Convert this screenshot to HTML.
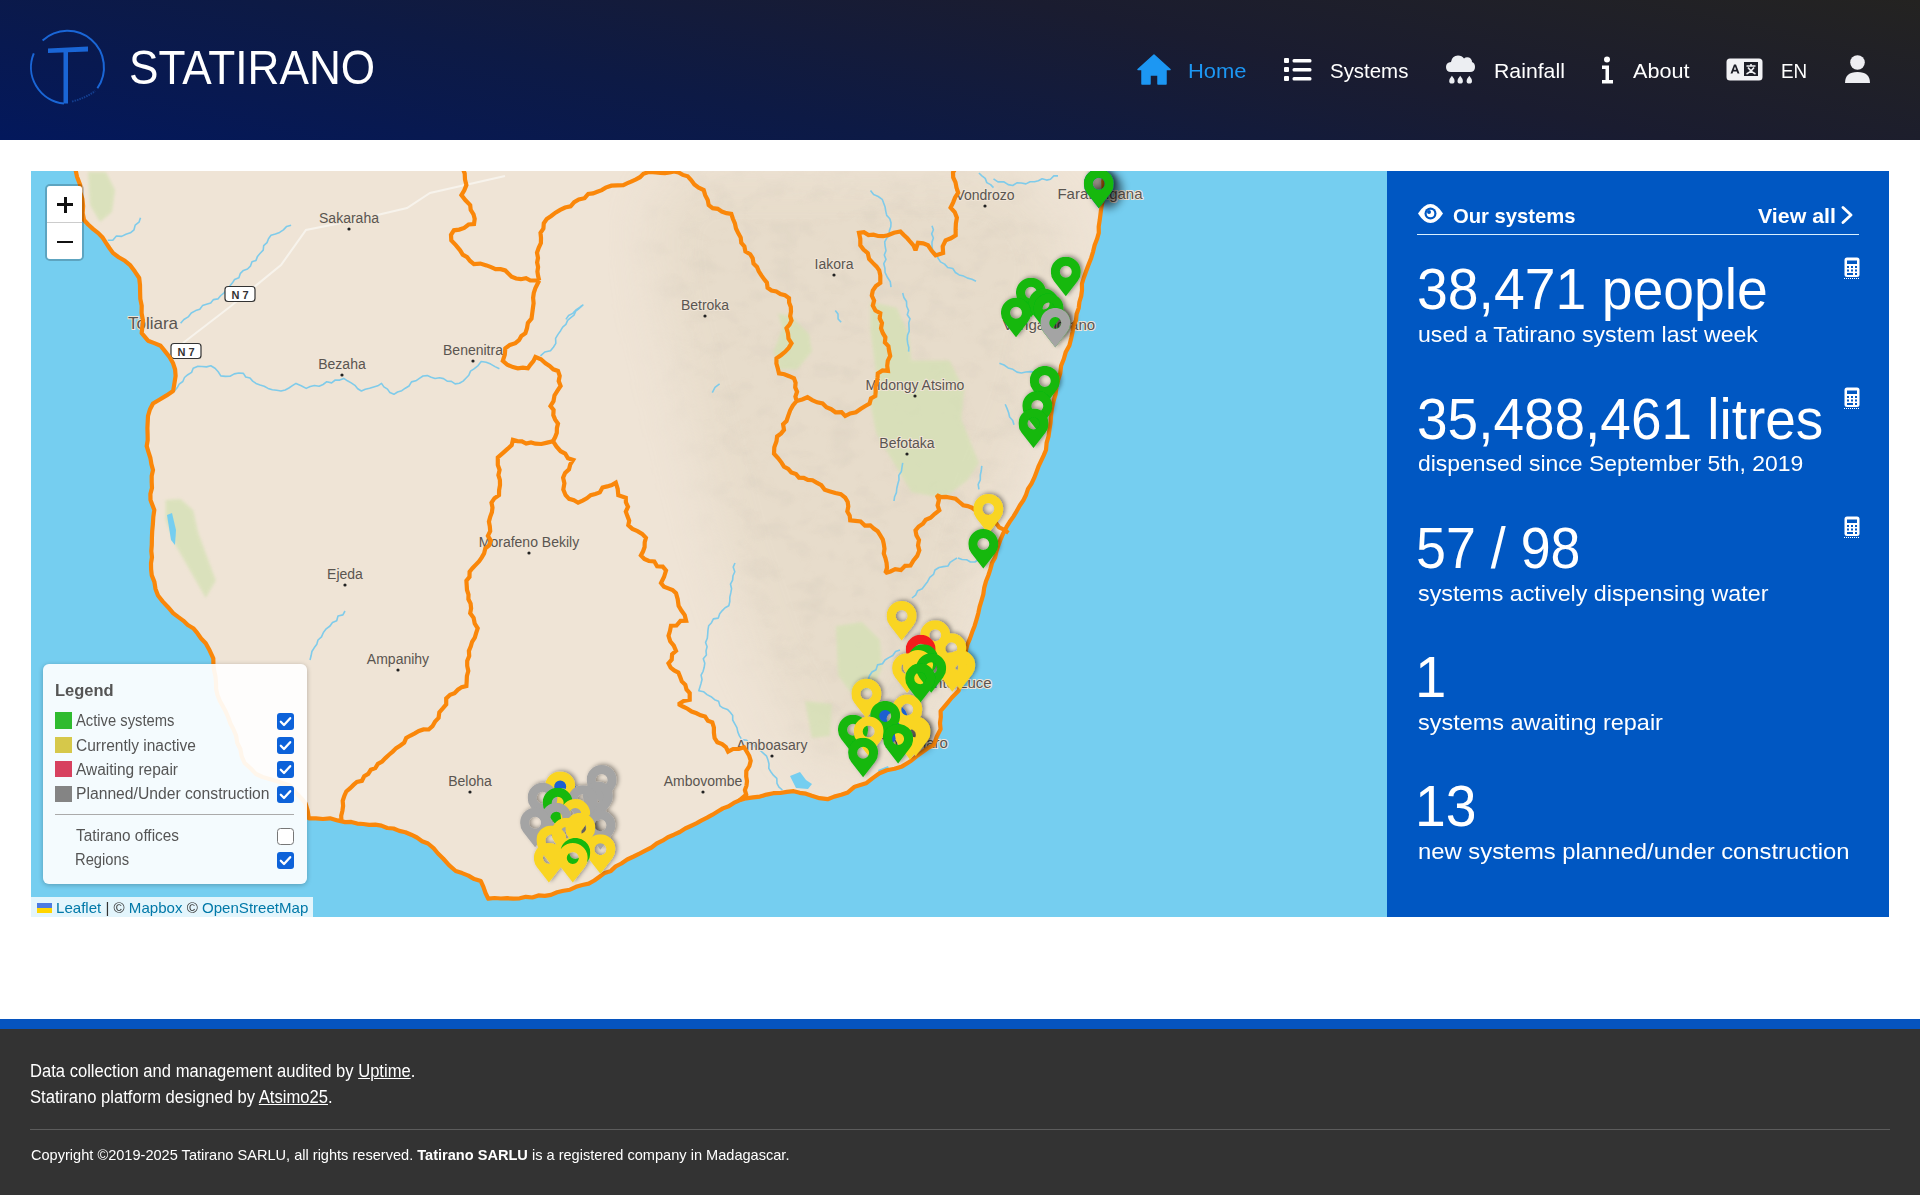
<!DOCTYPE html>
<html><head><meta charset="utf-8">
<style>
*{box-sizing:border-box;margin:0;padding:0}
html,body{width:1920px;height:1195px;overflow:hidden;background:#fff;font-family:"Liberation Sans",sans-serif}
.abs{position:absolute;white-space:nowrap}
#hdr{position:absolute;left:0;top:0;width:1920px;height:140px;background:linear-gradient(12deg,#03185c 0%,#0d1a45 35%,#1a1c30 65%,#242321 100%)}
#brand{left:130px;top:43px;color:#fff;font-size:47px;line-height:47px;letter-spacing:0px;transform-origin:0 0}
.nav{color:#fff;font-size:20px;line-height:20px;transform-origin:0 0}
#main-map{position:absolute;left:31px;top:171px;width:1356px;height:746px;overflow:hidden;background:#75cff0}
#side{position:absolute;left:1387px;top:171px;width:502px;height:746px;background:#0057c2;color:#fff}
.big{color:#fff;font-size:55px;line-height:55px;transform-origin:0 0}
.sub{color:#fff;font-size:22px;line-height:22px;transform-origin:0 0}
#foot-stripe{position:absolute;left:0;top:1019px;width:1920px;height:10px;background:#0654be}
#foot{position:absolute;left:0;top:1029px;width:1920px;height:166px;background:#333333;color:#fff}
.ft{color:#fff;font-size:17px;line-height:17px;transform-origin:0 0}
</style></head><body>
<div id="hdr">
  <svg class="abs" style="left:0;top:0" width="130" height="140" viewBox="0 0 130 140">
    <path d="M 42.6 40.6 A 36.5 36.5 0 0 1 97.4 88.2" fill="none" stroke="#1a66d6" stroke-width="2"/>
    <path d="M 33.8 53.3 A 36.5 36.5 0 0 0 64 103.6" fill="none" stroke="#1a66d6" stroke-width="2"/>
    <path d="M 48 48.5 L 88 46.5 L 88 51.5 L 48 53 Z" fill="#1a66d6"/>
    <rect x="63.5" y="50" width="4.5" height="53.5" fill="#1a66d6"/>
    <path d="M 72 101.5 Q 86 98 95 91" fill="none" stroke="#1a4fa8" stroke-width="2" stroke-dasharray="1.5 1" opacity="0.7"/>
  </svg>
  <div class="abs" id="brand" style="left:128.78px;top:44.37px;font-size:48px;line-height:48px;transform:scaleX(0.9202);transform-origin:0 0;letter-spacing:0px;color:#fff">STATIRANO</div>
  <!-- home icon -->
  <svg class="abs" style="left:1137px;top:54px" width="34" height="31" viewBox="0 0 34 31">
    <path d="M17 1 L33 15.5 L29 15.5 L29 30 L21 30 L21 21 L13 21 L13 30 L5 30 L5 15.5 L1 15.5 Z" fill="#1c97f3" stroke="#1c97f3" stroke-width="1.5" stroke-linejoin="round"/>
  </svg>
  <div class="abs nav" id="nHome" style="left:1187.83px;top:59.72px;font-size:21px;line-height:21px;transform:scaleX(1.0459);transform-origin:0 0;color:#1c97f3">Home</div>
  <!-- list icon -->
  <svg class="abs" style="left:1284px;top:58px" width="28" height="23" viewBox="0 0 28 23">
    <rect x="0" y="0" width="5" height="5" rx="1" fill="#fff"/><rect x="8.5" y="1" width="19" height="3.5" rx="1.5" fill="#fff"/>
    <rect x="0" y="9" width="5" height="5" rx="1" fill="#fff"/><rect x="8.5" y="10" width="19" height="3.5" rx="1.5" fill="#fff"/>
    <rect x="0" y="18" width="5" height="5" rx="1" fill="#fff"/><rect x="8.5" y="19" width="19" height="3.5" rx="1.5" fill="#fff"/>
  </svg>
  <div class="abs nav" id="nSystems" style="left:1330.21px;top:59.72px;font-size:21px;line-height:21px;transform:scaleX(0.9732);transform-origin:0 0;">Systems</div>
  <!-- cloud rain -->
  <svg class="abs" style="left:1445px;top:54px" width="31" height="30" viewBox="0 0 31 30">
    <path d="M6 18 Q1 18 1 13 Q1 8.5 6 8 Q7 1.5 13 1.5 Q17 1.5 19 4.5 Q21 2.5 24 3.5 Q27 5 27 8 Q30 9 30 13 Q30 18 25 18 Z" fill="#eceef2"/>
    <path d="M6.9 21.8 Q4.2 25 4.2 26.9 A2.7 2.7 0 0 0 9.600000000000001 26.9 Q9.600000000000001 25 6.9 21.8 Z M15.2 21.8 Q12.5 25 12.5 26.9 A2.7 2.7 0 0 0 17.9 26.9 Q17.9 25 15.2 21.8 Z M24.3 21.8 Q21.6 25 21.6 26.9 A2.7 2.7 0 0 0 27.0 26.9 Q27.0 25 24.3 21.8 Z " fill="#eceef2"/>
  </svg>
  <div class="abs nav" id="nRainfall" style="left:1494.27px;top:59.72px;font-size:21px;line-height:21px;transform:scaleX(1.0122);transform-origin:0 0;">Rainfall</div>
  <!-- info -->
  <svg class="abs" style="left:1601px;top:56px" width="13" height="28" viewBox="0 0 13 28">
    <circle cx="6" cy="3.5" r="3" fill="#fff"/>
    <path d="M1 9.5 L8 9.5 L8 24 L12 24 L12 27.5 L1 27.5 L1 24 L4.5 24 L4.5 13 L1 13 Z" fill="#fff"/>
  </svg>
  <div class="abs nav" id="nAbout" style="left:1632.82px;top:59.72px;font-size:21px;line-height:21px;transform:scaleX(1.0297);transform-origin:0 0;">About</div>
  <!-- language -->
  <svg class="abs" style="left:1726px;top:58px" width="37" height="23" viewBox="0 0 37 23">
    <rect x="0.5" y="0.5" width="36" height="22" rx="3.5" fill="#f2f2f5"/>
    <rect x="18" y="4" width="14" height="14" fill="#1d1e28"/>
    <path d="M4.5 15.5 L8 6.5 L10 6.5 L13.5 15.5 L11.5 15.5 L10.8 13.5 L7.2 13.5 L6.5 15.5 Z M7.8 11.8 L10.2 11.8 L9 8.5 Z" fill="#1d1e28"/>
    <path d="M20.5 8 L29.5 8 M25 6 L25 8 M22 9.5 Q25 14 29.5 16 M28 9.5 Q25 14 20.5 16" stroke="#f2f2f5" stroke-width="1.6" fill="none"/>
  </svg>
  <div class="abs nav" id="nEN" style="left:1781.26px;top:60.22px;font-size:21px;line-height:21px;transform:scaleX(0.8965);transform-origin:0 0;">EN</div>
  <!-- user -->
  <svg class="abs" style="left:1844px;top:54px" width="27" height="30" viewBox="0 0 27 30">
    <circle cx="13.5" cy="8.5" r="7.3" fill="#eeeef2"/>
    <path d="M1 29 Q1 18 13.5 18 Q26 18 26 29 Z" fill="#eeeef2"/>
  </svg>
</div>

<div id="main-map"><svg width="1356" height="746" viewBox="31 171 1356 746" style="display:block">
<defs><symbol id="pin" viewBox="0 0 30 41" width="30" height="41"><path fill-rule="evenodd" d="M15 39.5 L3.14 24.19 A15 15 0 1 1 26.86 24.19 Z M9 15 a6 6 0 1 0 12 0 a6 6 0 1 0 -12 0 Z"/></symbol><filter id="sh" x="-30%" y="-30%" width="160%" height="160%"><feDropShadow dx="2" dy="-1" stdDeviation="2" flood-color="#000" flood-opacity="0.4"/></filter><filter id="bl" x="-50%" y="-50%" width="200%" height="200%"><feGaussianBlur stdDeviation="4"/></filter><filter id="bl1" x="-20%" y="-20%" width="140%" height="140%"><feGaussianBlur stdDeviation="1.5"/></filter><filter id="hill" x="0" y="0" width="100%" height="100%"><feTurbulence type="fractalNoise" baseFrequency="0.035 0.05" numOctaves="3" seed="7" result="n"/><feColorMatrix in="n" type="matrix" values="0 0 0 0 0.35  0 0 0 0 0.33  0 0 0 0 0.30  0 0 0 -2.2 1.25" result="c"/><feComposite in="c" in2="SourceAlpha" operator="in"/></filter><filter id="bl2"><feGaussianBlur stdDeviation="25"/></filter></defs>
<rect x="31" y="171" width="1356" height="746" fill="#75cef0"/>
<polygon points="75.2,168.0 80.2,185.0 84.0,220.0 102.8,237.8 112.9,252.9 130.4,265.4 139.2,278.0 141.7,305.6 143.0,320.6 141.7,333.2 148.0,340.7 160.6,345.7 173.1,363.3 175.6,375.9 173.1,391.0 153.0,403.5 148.0,416.0 146.7,446.2 153.0,470.0 150.5,500.0 154.3,510.0 151.8,545.0 151.8,575.4 158.0,595.5 173.1,613.1 193.2,628.2 205.7,643.2 213.3,658.3 217.5,695.0 233.3,729.0 244.6,763.0 256.0,774.0 289.8,785.5 305.6,803.6 308.8,818.3 330.0,818.3 345.2,822.1 375.3,824.6 405.4,832.2 428.0,843.5 443.1,858.5 455.7,871.0 480.8,881.1 488.3,898.7 513.4,898.7 551.0,894.9 588.7,883.6 621.4,863.5 640.0,853.4 685.2,828.5 739.4,800.3 766.6,794.6 793.7,791.2 811.8,795.8 827.6,799.2 847.9,792.4 854.7,786.7 866.0,783.3 879.5,773.2 902.1,766.4 911.2,760.7 933.8,744.9 940.6,729.1 940.6,711.0 951.9,697.5 958.6,690.7 965.7,650.9 978.3,613.2 988.3,575.5 1003.4,532.9 1023.4,500.2 1046.0,450.0 1048.6,436.1 1053.6,401.0 1061.1,365.8 1071.2,338.2 1078.7,308.1 1083.7,278.0 1091.2,257.9 1098.8,232.8 1101.3,207.7 1105.0,168.0" fill="#efe4d6"/>
<clipPath id="landclip"><polygon points="75.2,168.0 80.2,185.0 84.0,220.0 102.8,237.8 112.9,252.9 130.4,265.4 139.2,278.0 141.7,305.6 143.0,320.6 141.7,333.2 148.0,340.7 160.6,345.7 173.1,363.3 175.6,375.9 173.1,391.0 153.0,403.5 148.0,416.0 146.7,446.2 153.0,470.0 150.5,500.0 154.3,510.0 151.8,545.0 151.8,575.4 158.0,595.5 173.1,613.1 193.2,628.2 205.7,643.2 213.3,658.3 217.5,695.0 233.3,729.0 244.6,763.0 256.0,774.0 289.8,785.5 305.6,803.6 308.8,818.3 330.0,818.3 345.2,822.1 375.3,824.6 405.4,832.2 428.0,843.5 443.1,858.5 455.7,871.0 480.8,881.1 488.3,898.7 513.4,898.7 551.0,894.9 588.7,883.6 621.4,863.5 640.0,853.4 685.2,828.5 739.4,800.3 766.6,794.6 793.7,791.2 811.8,795.8 827.6,799.2 847.9,792.4 854.7,786.7 866.0,783.3 879.5,773.2 902.1,766.4 911.2,760.7 933.8,744.9 940.6,729.1 940.6,711.0 951.9,697.5 958.6,690.7 965.7,650.9 978.3,613.2 988.3,575.5 1003.4,532.9 1023.4,500.2 1046.0,450.0 1048.6,436.1 1053.6,401.0 1061.1,365.8 1071.2,338.2 1078.7,308.1 1083.7,278.0 1091.2,257.9 1098.8,232.8 1101.3,207.7 1105.0,168.0"/></clipPath>
<mask id="hm" maskUnits="userSpaceOnUse" x="31" y="171" width="1356" height="746"><polygon points="680.0,171.0 1010.0,171.0 1070.0,240.0 1040.0,400.0 990.0,520.0 960.0,640.0 930.0,720.0 880.0,770.0 810.0,760.0 760.0,660.0 720.0,540.0 690.0,420.0 660.0,300.0 650.0,220.0" fill="#fff" filter="url(#bl2)"/></mask>
<g clip-path="url(#landclip)"><g mask="url(#hm)"><rect x="31" y="171" width="1356" height="746" fill="#000" filter="url(#hill)" opacity="0.12"/><rect x="31" y="171" width="1356" height="746" fill="#d9cdb8" opacity="0.35"/></g></g>
<polygon points="88.0,172.0 106.0,172.0 115.0,190.0 112.0,212.0 100.0,222.0 90.0,205.0" fill="#d4e1b4" opacity="0.75" filter="url(#bl1)"/>
<polygon points="165.6,500.0 180.6,498.9 193.2,510.2 198.2,532.8 215.8,580.5 205.7,598.0 175.6,545.3 165.6,520.2" fill="#d4e1b4" opacity="0.75" filter="url(#bl1)"/>
<polygon points="778.0,313.5 791.4,316.5 809.0,334.0 811.9,351.6 797.3,369.2 778.2,369.2 773.8,351.6 782.6,328.0" fill="#d4e1b4" opacity="0.75" filter="url(#bl1)"/>
<polygon points="870.5,301.8 896.8,307.7 908.6,334.0 911.5,360.4 949.6,360.4 964.2,389.7 961.3,419.0 978.9,462.9 967.1,480.5 943.7,498.0 911.5,492.2 893.9,462.9 876.3,433.6 870.5,404.3 876.3,375.0 870.5,331.0" fill="#d4e1b4" opacity="0.75" filter="url(#bl1)"/>
<polygon points="836.0,626.0 862.0,622.0 880.0,640.0 882.0,668.0 872.0,690.0 850.0,692.0 838.0,675.0" fill="#d4e1b4" opacity="0.75" filter="url(#bl1)"/>
<polygon points="805.0,701.0 832.0,704.0 830.0,736.0 812.0,738.0" fill="#d4e1b4" opacity="0.75" filter="url(#bl1)"/>
<polygon points="167.0,515.0 172.0,513.0 176.0,530.0 175.0,545.0 171.0,540.0" fill="#75cef0"/>
<polygon points="878.0,770.0 888.0,766.0 892.0,776.0 882.0,780.0" fill="#75cef0"/>
<polygon points="790.0,776.0 800.0,772.0 806.0,780.0 812.0,784.0 808.0,789.0 796.0,788.0" fill="#75cef0"/>
<polyline points="174.4,391.0 177.1,387.8 179.2,384.1 182.8,381.5 184.5,377.5 187.8,374.7 191.6,372.4 193.2,368.3 197.4,366.4 201.9,366.5 206.5,366.9 210.8,365.8 215.0,368.3 218.2,371.8 220.8,375.9 225.4,376.4 230.0,376.3 234.3,373.9 238.8,373.0 243.4,373.4 245.7,377.0 250.0,378.0 252.7,381.1 256.0,383.4 260.1,385.0 264.2,386.3 268.1,388.4 272.3,389.8 276.7,390.3 281.0,391.0 285.2,390.0 288.9,388.0 292.4,385.7 296.0,383.4 301.2,385.7 306.2,388.4 310.2,386.5 314.4,385.5 319.1,386.3 323.1,384.5 326.8,381.7 331.6,382.9 335.3,380.0 339.8,380.1 343.8,378.4 347.4,380.8 351.2,382.9 354.9,385.3 357.7,388.7 361.4,391.0 365.3,389.2 369.6,388.3 373.7,387.0 377.8,385.8 381.5,383.4 383.9,386.9 387.5,389.1 389.9,392.6 393.9,394.3 397.5,392.0 401.8,390.7 405.3,388.2 409.0,386.0 411.5,381.9 415.8,380.8 419.4,378.3 423.0,376.0 427.3,375.6 431.2,377.2 435.1,378.5 439.5,377.8 443.5,378.6 447.2,381.1 451.4,381.4 455.1,383.9 459.4,383.3 463.1,381.1 465.9,378.2 468.8,375.2 470.5,371.1 474.0,368.8 478.1,365.6 481.2,361.5 486.2,362.2 490.7,364.1 495.0,366.6 499.4,368.8" fill="none" stroke="#7fcbea" stroke-width="1.6" stroke-linejoin="round"/>
<polyline points="180.6,323.2 183.9,319.5 188.2,316.9 191.3,313.0 195.7,310.6 199.8,309.3 202.5,305.6 206.5,304.3 210.7,303.1 213.5,299.6 217.9,298.9 220.8,295.5 224.1,292.8 226.6,289.3 229.6,286.3 232.3,283.1 234.6,279.5 238.9,277.7 240.4,273.3 243.4,270.4 247.5,269.0 250.4,266.2 252.0,261.8 256.0,260.4 257.5,256.4 260.2,253.2 263.2,250.1 263.7,245.6 267.0,242.6 268.5,238.7 271.0,235.3 275.4,234.0 279.6,232.4 283.4,229.9 286.7,226.4 291.1,225.2" fill="none" stroke="#7fcbea" stroke-width="1.6" stroke-linejoin="round"/>
<polyline points="107.8,240.3 112.8,240.2 116.4,236.0 121.6,236.4 125.9,234.3 130.4,232.8 134.0,229.8 135.2,225.1 139.0,222.2 140.5,217.7" fill="none" stroke="#7fcbea" stroke-width="1.6" stroke-linejoin="round"/>
<polyline points="581.9,305.6 579.0,308.5 575.7,311.1 574.0,315.1 570.8,317.7 567.6,320.4 565.9,324.4 562.7,327.1 560.6,330.7 558.0,334.4 555.6,338.3 555.8,343.4 553.4,347.2 550.5,350.8 544.8,352.0 540.5,355.8" fill="none" stroke="#7fcbea" stroke-width="1.6" stroke-linejoin="round"/>
<polyline points="735.0,563.0 733.2,567.1 734.8,571.7 733.0,575.8 732.6,580.1 730.5,584.2 731.6,588.7 730.8,592.9 729.8,597.1 729.8,601.5 728.8,605.7 725.1,607.7 722.3,610.6 719.7,613.8 718.3,618.1 713.4,618.9 711.5,622.7 708.7,625.7 708.0,629.9 707.7,634.1 707.3,638.3 705.6,642.4 707.1,646.8 706.0,650.9 706.4,655.1 703.3,658.8 704.8,663.2 704.2,667.3 703.1,671.3 701.1,675.2 702.0,679.5 701.0,683.5 698.8,690.7 703.5,691.7 707.0,694.6 711.1,696.7 714.6,699.7 718.6,701.2 719.9,705.9 723.2,708.1 727.4,709.4 730.2,712.3 732.7,715.5 732.7,720.0 734.8,723.8 736.9,727.7 737.8,731.9 739.4,735.9 741.9,739.6 746.7,740.3 749.4,743.8 753.9,744.9 756.4,748.6 760.3,750.5 763.5,753.3 766.6,756.2 768.0,760.1 769.0,764.0 768.8,768.4 771.0,772.0 773.6,775.4 776.8,778.4 777.0,783.3 779.0,787.1 782.4,790.0" fill="none" stroke="#7fcbea" stroke-width="1.6" stroke-linejoin="round"/>
<polyline points="345.0,611.0 342.9,614.9 338.0,616.0 336.7,620.7 332.5,622.5 330.0,626.0 326.2,628.8 323.4,632.5 321.5,636.9 318.0,640.0 316.8,644.2 314.2,647.8 311.9,651.5 311.1,655.8 310.0,660.0" fill="none" stroke="#7fcbea" stroke-width="1.6" stroke-linejoin="round"/>
<polyline points="870.5,190.5 873.6,194.6 878.2,196.5 882.2,199.3 883.7,203.2 885.1,207.1 885.8,211.3 886.7,215.4 889.8,218.7 891.0,222.7 890.8,226.8 889.4,230.6 889.3,234.8 886.6,238.3 884.7,241.9 885.1,246.2 886.0,250.6 884.3,255.0 886.0,259.4 883.8,263.7 884.9,268.1 885.1,272.5 887.4,277.3 890.3,281.8 891.0,287.2" fill="none" stroke="#7fcbea" stroke-width="1.6" stroke-linejoin="round"/>
<polyline points="932.0,225.7 933.4,229.8 931.7,233.9 933.4,238.0 932.0,242.1 932.0,246.2 932.7,250.7 936.5,253.7 937.9,257.9 940.5,261.9 944.6,264.1 947.7,267.5 952.8,268.5 955.4,272.5 959.2,274.9 963.6,276.1 967.6,278.1 972.0,279.2 976.0,281.3" fill="none" stroke="#7fcbea" stroke-width="1.6" stroke-linejoin="round"/>
<polyline points="902.7,293.0 903.9,297.5 906.5,301.5 906.7,306.3 908.6,310.6 907.3,314.7 910.0,318.8 908.8,322.9 909.0,327.0 909.2,331.1 907.5,335.2 907.2,339.3 907.7,343.4 908.8,347.5 908.6,351.6" fill="none" stroke="#7fcbea" stroke-width="1.6" stroke-linejoin="round"/>
<polyline points="835.3,310.6 838.0,314.1 838.1,319.0 841.2,322.3" fill="none" stroke="#7fcbea" stroke-width="1.6" stroke-linejoin="round"/>
<polyline points="999.4,363.3 1004.1,365.0 1008.1,367.9 1012.9,369.3 1017.0,372.1 1021.4,373.0 1025.8,372.0 1030.1,371.6 1034.5,372.1" fill="none" stroke="#7fcbea" stroke-width="1.6" stroke-linejoin="round"/>
<polyline points="1005.2,404.3 1007.0,408.4 1008.6,412.6 1009.6,417.0 1012.7,420.5 1014.0,424.8" fill="none" stroke="#7fcbea" stroke-width="1.6" stroke-linejoin="round"/>
<polyline points="993.5,178.8 997.9,181.9 1003.7,181.8 1008.2,184.6 1012.7,185.5 1016.9,182.9 1021.3,183.0 1025.9,183.9 1030.1,181.8 1034.5,181.7 1038.4,180.8 1042.1,178.8 1046.6,180.1 1050.5,179.2 1053.8,175.9 1058.0,175.9" fill="none" stroke="#7fcbea" stroke-width="1.6" stroke-linejoin="round"/>
<polyline points="978.9,173.0 981.9,175.8 985.2,178.4 986.8,182.6 990.6,184.6 993.5,187.6" fill="none" stroke="#7fcbea" stroke-width="1.6" stroke-linejoin="round"/>
<polyline points="981.8,465.8 981.3,470.5 980.3,475.2 980.3,479.9 978.2,484.4 978.9,489.3" fill="none" stroke="#7fcbea" stroke-width="1.6" stroke-linejoin="round"/>
<polyline points="902.7,462.9 902.0,467.2 901.4,471.5 898.8,475.4 899.0,479.9 897.8,484.0 896.8,488.3 896.4,492.6 894.6,496.7 894.0,501.0" fill="none" stroke="#7fcbea" stroke-width="1.6" stroke-linejoin="round"/>
<polyline points="565.9,319.4 568.6,315.5 572.8,313.4 575.9,310.0 579.8,307.5 583.4,304.7" fill="none" stroke="#7fcbea" stroke-width="1.6" stroke-linejoin="round"/>
<polyline points="712.3,392.6 715.0,387.4 719.6,383.8" fill="none" stroke="#7fcbea" stroke-width="1.6" stroke-linejoin="round"/>
<polyline points="957.0,558.0 953.5,560.1 950.1,562.3 948.0,566.0 943.4,566.6 939.0,567.5 935.0,570.0 933.5,574.4 929.8,577.4 927.7,581.4 925.0,585.0 922.2,588.7 917.7,590.7 915.6,595.1 912.0,598.0" fill="none" stroke="#7fcbea" stroke-width="1.6" stroke-linejoin="round"/>
<polyline points="985.0,550.0 981.2,553.6 979.3,558.8 975.0,562.0 970.5,562.0 966.6,559.7 962.1,559.5 958.0,558.0" fill="none" stroke="#7fcbea" stroke-width="1.6" stroke-linejoin="round"/>
<polyline points="900.0,650.0 895.6,651.5 892.8,655.5 888.8,657.6 885.0,660.0 882.5,663.8 877.5,664.9 876.0,669.8 872.0,672.0 869.5,675.8 868.0,680.0" fill="none" stroke="#7fcbea" stroke-width="1.6" stroke-linejoin="round"/>
<polyline points="982.0,506.0 985.0,502.9 988.9,500.9 992.0,498.0" fill="none" stroke="#7fcbea" stroke-width="1.6" stroke-linejoin="round"/>
<polyline points="183,343 231,306 281,265 306,230 356,220 407,208 430,193 505,176" fill="none" stroke="#f7f3ec" stroke-width="2"/>
<rect x="225" y="286.5" width="30" height="15" rx="3" fill="#fff" stroke="#333" stroke-width="1.2"/><text x="240" y="298.5" font-size="11" font-weight="bold" text-anchor="middle" fill="#333" font-family="Liberation Sans">N 7</text>
<rect x="171" y="343.5" width="30" height="15" rx="3" fill="#fff" stroke="#333" stroke-width="1.2"/><text x="186" y="355.5" font-size="11" font-weight="bold" text-anchor="middle" fill="#333" font-family="Liberation Sans">N 7</text>
<g font-family="Liberation Sans" font-size="14" fill="#5a5550" text-anchor="middle" stroke="#efe4d6" stroke-width="2" paint-order="stroke">
<text x="349" y="223" font-size="14">Sakaraha</text>
<text x="153" y="329" font-size="17">Toliara</text>
<text x="342" y="369" font-size="14">Bezaha</text>
<text x="473" y="355" font-size="14">Benenitra</text>
<text x="705" y="310" font-size="14">Betroka</text>
<text x="834" y="269" font-size="14">Iakora</text>
<text x="985" y="200" font-size="14">Vondrozo</text>
<text x="1100" y="199" font-size="15">Farafangana</text>
<text x="1049" y="330" font-size="15">Vangaindrano</text>
<text x="915" y="390" font-size="14">Midongy Atsimo</text>
<text x="907" y="448" font-size="14">Befotaka</text>
<text x="529" y="547" font-size="14">Morafeno Bekily</text>
<text x="345" y="579" font-size="14">Ejeda</text>
<text x="398" y="664" font-size="14">Ampanihy</text>
<text x="470" y="786" font-size="14">Beloha</text>
<text x="703" y="786" font-size="14">Ambovombe</text>
<text x="772" y="750" font-size="14">Amboasary</text>
<text x="952" y="688" font-size="15">Sainte Luce</text>
<text x="915" y="748" font-size="15">Tolagnaro</text>
</g>
<circle cx="349" cy="229" r="1.6" fill="#222"/>
<circle cx="342" cy="375" r="1.6" fill="#222"/>
<circle cx="473" cy="361" r="1.6" fill="#222"/>
<circle cx="705" cy="316" r="1.6" fill="#222"/>
<circle cx="834" cy="275" r="1.6" fill="#222"/>
<circle cx="985" cy="206" r="1.6" fill="#222"/>
<circle cx="915" cy="396" r="1.6" fill="#222"/>
<circle cx="907" cy="454" r="1.6" fill="#222"/>
<circle cx="529" cy="553" r="1.6" fill="#222"/>
<circle cx="345" cy="585" r="1.6" fill="#222"/>
<circle cx="398" cy="670" r="1.6" fill="#222"/>
<circle cx="470" cy="792" r="1.6" fill="#222"/>
<circle cx="703" cy="792" r="1.6" fill="#222"/>
<circle cx="772" cy="756" r="1.6" fill="#222"/>
<polyline points="75.2,168.0 77.0,176.7 80.2,185.0 80.2,192.1 82.4,198.9 83.1,205.9 82.7,213.1 84.0,220.0 88.4,224.7 93.2,229.1 98.3,233.1 102.8,237.8 106.0,242.9 109.4,248.0 112.9,252.9 118.7,257.2 124.9,260.8 130.4,265.4 134.9,271.6 139.2,278.0 140.0,284.9 140.1,291.8 140.3,298.8 141.7,305.6 141.6,313.2 143.0,320.6 142.3,326.9 141.7,333.2 148.0,340.7 154.3,343.1 160.6,345.7 165.1,351.4 169.5,357.0 173.1,363.3 175.1,369.5 175.6,375.9 174.4,383.5 173.1,391.0 166.6,395.4 159.8,399.5 153.0,403.5 149.9,409.5 148.0,416.0 147.7,422.0 147.4,428.1 147.6,434.1 147.7,440.2 146.7,446.2 148.5,452.1 150.4,458.0 151.4,464.1 153.0,470.0 151.7,475.9 151.7,482.0 152.0,488.0 150.4,493.9 150.5,500.0 154.3,510.0 153.3,517.0 152.9,524.0 152.2,531.0 151.9,538.0 151.8,545.0 151.3,551.1 152.0,557.2 151.0,563.2 151.1,569.3 151.8,575.4 154.4,581.9 155.5,588.9 158.0,595.5 162.8,601.6 168.1,607.2 173.1,613.1 178.1,616.9 183.2,620.6 187.8,625.0 193.2,628.2 197.4,633.2 201.1,638.5 205.7,643.2 209.7,650.6 213.3,658.3 213.4,664.5 214.1,670.6 215.5,676.6 216.0,682.8 216.1,689.0 217.5,695.0 219.8,700.8 222.8,706.3 225.8,711.8 228.3,717.5 230.4,723.5 233.3,729.0 236.1,735.6 237.2,742.8 240.4,749.3 241.7,756.4 244.6,763.0 250.5,768.3 256.0,774.0 262.5,777.0 269.4,778.9 276.3,780.9 283.0,783.2 289.8,785.5 293.6,790.2 297.6,794.6 301.9,798.9 305.6,803.6 307.7,810.9 308.8,818.3 315.9,818.3 322.9,819.0 330.0,818.3 337.6,820.4 345.2,822.1 351.3,821.9 357.2,823.6 363.2,824.0 369.2,824.8 375.3,824.6 381.4,825.6 387.2,828.0 393.5,828.5 399.3,830.9 405.4,832.2 411.2,834.7 416.9,837.5 422.1,841.2 428.0,843.5 433.5,848.1 438.0,853.5 443.1,858.5 449.0,865.2 455.7,871.0 462.1,873.1 468.4,875.6 474.3,879.1 480.8,881.1 483.4,886.9 485.5,893.0 488.3,898.7 494.6,898.0 500.9,898.5 507.1,898.2 513.4,898.7 519.7,898.3 525.9,896.8 532.3,897.5 538.4,895.4 544.8,895.9 551.0,894.9 557.1,892.3 563.5,890.8 570.0,889.7 576.0,886.8 582.3,885.0 588.7,883.6 594.3,880.5 599.5,876.7 604.7,872.9 610.9,870.9 615.7,866.4 621.4,863.5 627.2,859.5 633.7,856.5 640.0,853.4 645.7,850.4 651.5,847.5 656.7,843.5 662.5,840.7 667.9,837.2 673.9,834.7 679.8,832.0 685.2,828.5 690.8,826.0 696.3,823.4 701.6,820.4 707.1,817.7 712.5,814.7 717.7,811.5 722.9,808.4 728.7,806.2 733.8,802.9 739.4,800.3 746.1,798.3 753.0,797.4 759.9,796.6 766.6,794.6 773.3,793.2 780.2,793.0 786.9,791.9 793.7,791.2 799.7,792.8 805.9,793.7 811.8,795.8 819.5,798.2 827.6,799.2 834.2,796.6 841.2,794.8 847.9,792.4 854.7,786.7 866.0,783.3 872.7,778.1 879.5,773.2 886.8,770.2 894.6,768.8 902.1,766.4 911.2,760.7 916.5,756.3 922.1,752.2 927.7,748.2 933.8,744.9 936.7,736.8 940.6,729.1 940.0,723.1 940.8,717.0 940.6,711.0 946.3,704.3 951.9,697.5 958.6,690.7 960.5,684.2 961.7,677.6 962.9,670.9 962.9,664.1 964.4,657.5 965.7,650.9 967.4,644.5 970.0,638.4 972.2,632.1 974.6,625.9 976.5,619.6 978.3,613.2 979.6,606.8 981.5,600.6 983.3,594.4 984.2,587.9 985.9,581.6 988.3,575.5 990.3,569.4 992.0,563.1 995.1,557.4 996.5,551.0 998.5,544.9 1000.8,538.8 1003.4,532.9 1006.4,527.2 1009.7,521.8 1013.4,516.6 1016.7,511.1 1019.8,505.5 1023.4,500.2 1026.1,494.7 1028.0,488.9 1031.5,483.7 1034.1,478.2 1036.3,472.5 1038.4,466.7 1041.0,461.2 1043.6,455.6 1046.0,450.0 1046.6,442.9 1048.6,436.1 1049.5,429.1 1050.6,422.1 1051.1,415.0 1052.0,407.9 1053.6,401.0 1055.6,394.1 1056.4,386.9 1058.1,379.9 1060.3,373.0 1061.1,365.8 1063.8,359.0 1065.8,351.9 1069.4,345.4 1071.2,338.2 1072.5,332.1 1073.5,326.0 1076.0,320.2 1076.6,314.0 1078.7,308.1 1079.4,302.0 1081.2,296.1 1082.0,290.1 1081.9,283.9 1083.7,278.0 1086.1,271.3 1088.6,264.6 1091.2,257.9 1093.1,251.6 1094.6,245.2 1097.0,239.1 1098.8,232.8 1098.7,226.5 1099.7,220.2 1100.5,214.0 1101.3,207.7 1102.6,201.1 1101.9,194.4 1103.6,187.9 1103.3,181.2 1104.5,174.6 1105.0,168.0" fill="none" stroke="#fa870a" stroke-width="4.2" stroke-linejoin="round"/>
<polyline points="462.6,168.0 464.7,173.5 465.0,179.4 466.4,185.0 464.3,190.2 461.4,195.1 465.5,200.3 470.2,205.1 470.7,209.9 473.5,214.3 474.7,218.9 474.0,224.0 468.6,224.5 464.2,227.9 459.2,229.6 453.9,230.3 451.0,234.9 451.3,240.3 455.8,245.2 460.1,250.3 462.7,254.6 467.1,257.1 470.1,261.0 473.9,264.1 480.3,263.6 486.5,265.4 491.1,267.1 495.6,269.1 500.6,269.2 505.3,270.4 511.6,276.7 516.1,278.5 520.9,279.2 526.0,278.1 530.4,280.5 539.2,280.5" fill="none" stroke="#fa870a" stroke-width="4.2" stroke-linejoin="miter" stroke-miterlimit="2"/>
<polyline points="539.2,280.5 538.1,276.0 537.4,271.5 538.1,267.0 537.1,262.5 538.0,257.9 537.0,252.7 538.7,247.8 540.9,243.0 541.0,237.9 540.5,232.8 543.4,228.6 543.8,223.2 546.7,219.0 551.2,216.0 555.5,212.7 560.2,209.9 565.1,207.5 570.6,206.4 574.2,202.2 578.8,199.4 584.6,198.2 588.2,193.9 593.0,193.4 597.3,191.7 601.7,190.1 605.7,187.6 611.4,185.7 617.3,185.3 623.3,185.1 627.5,183.2 631.7,181.3 636.0,179.4 640.0,177.2 643.4,173.8 649.6,171.8 656.0,172.5 660.5,172.9 665.0,173.1 669.6,172.5 674.1,171.4 678.6,172.5 682.8,174.9 687.7,176.3 691.1,180.0 694.4,184.5 698.7,187.7 703.7,190.1 705.2,195.2 707.7,199.9 708.7,205.1 712.7,208.2 717.7,208.8 721.8,211.6 726.4,213.2 731.3,213.9 732.9,218.7 734.9,223.4 736.0,228.5 738.2,233.1 740.7,237.6 741.3,242.8 744.4,246.5 745.4,251.5 750.2,254.2 752.7,258.3 753.5,263.4 757.0,266.9 758.8,271.4 761.4,275.4 764.0,279.1 766.9,282.7 767.6,287.7 771.5,290.5 776.3,291.4 780.4,294.0 785.0,295.2 789.0,298.0 789.1,302.6 790.8,307.0 791.0,311.5 790.2,316.2 791.5,320.6 789.5,324.7 786.5,328.2 788.0,333.3 788.5,338.6 791.5,343.2 788.7,347.9 785.1,351.8 780.9,355.2 776.5,358.3 776.4,363.5 777.8,368.4 779.0,373.4 784.3,374.2 789.2,376.2 794.0,378.4 795.6,382.8 795.2,387.4 797.1,391.8 795.4,396.6 796.6,401.0 792.9,405.4 790.2,410.3 788.3,415.6 786.5,421.0 783.1,424.3 784.0,429.8 781.1,433.4 777.1,436.5 776.5,441.2 774.3,447.3 774.0,453.7 778.0,458.0 781.5,462.6 784.0,466.7 788.2,468.9 791.3,472.4 796.0,474.1 799.0,477.6 803.7,477.8 807.9,479.9 812.5,480.2 816.6,482.6 821.3,485.2 824.7,489.8 830.1,491.4 835.4,493.0 840.8,494.1 845.2,497.7 847.7,501.9 848.3,506.5 847.3,511.5 849.7,515.7 850.2,520.3 855.4,520.9 860.6,521.5 864.9,525.6 870.3,525.3 873.8,528.5 877.7,531.3 880.3,535.4 882.8,539.6 883.8,544.1 884.5,548.7 883.8,553.6 885.4,558.0 886.6,563.0 887.0,568.0 885.4,573.0 890.4,571.5 895.2,569.2 900.9,570.1 905.1,565.8 910.5,565.5 913.5,560.5 917.2,555.9 919.3,550.4 918.0,545.4 919.0,540.0 916.4,535.3 915.5,530.3 918.7,526.5 922.9,523.8 925.8,519.7 930.6,517.8 934.8,513.8 939.3,510.3 937.6,505.4 938.9,500.0 936.8,495.2 941.2,497.1 946.0,496.9 950.6,497.7 955.6,498.8 959.4,502.0 963.2,505.2 967.7,506.1 971.9,507.7 975.7,510.3 980.2,512.0 983.1,516.4 988.4,516.8 992.6,519.0 995.8,522.8 999.1,527.3 1004.1,529.7 1008.4,532.9" fill="none" stroke="#fa870a" stroke-width="4.2" stroke-linejoin="miter" stroke-miterlimit="2"/>
<polyline points="796.6,401.0 802.2,399.5 807.5,397.2 812.2,400.1 817.2,402.3 822.6,403.5 826.4,407.3 831.2,409.2 835.5,412.3 841.5,412.1 845.2,416.0 850.2,413.4 855.9,412.3 860.5,409.0 865.3,406.0 869.6,403.6 871.0,398.4 875.3,396.0 875.7,391.5 875.4,386.9 876.9,382.5 877.5,377.9 877.8,373.4 882.5,370.5 887.9,370.9 887.2,365.8 887.8,360.8 890.2,355.9 889.1,350.8 888.4,346.1 884.9,342.4 885.4,337.3 882.9,333.2 881.0,328.3 882.0,323.1 879.7,318.3 880.3,313.1 875.4,310.5 872.8,305.6 874.1,300.6 871.8,295.5 872.8,290.5 875.9,286.1 880.3,283.0 880.3,275.4 879.2,270.4 876.4,266.4 872.8,262.9 869.1,258.9 867.8,253.2 863.5,249.6 860.3,245.3 860.3,239.0 859.0,232.8 863.9,232.2 868.5,235.1 873.4,234.7 878.1,236.0 883.0,236.2 887.9,235.3 894.0,232.7 900.4,231.5 903.8,235.0 907.3,238.3 910.4,242.0 913.6,245.6 915.5,250.3 918.0,242.8 923.2,243.4 928.0,245.3 931.5,250.6 935.6,255.4 943.1,252.9 942.7,246.3 945.6,240.3 950.9,238.3 955.7,235.3 955.6,229.4 955.9,223.5 956.9,217.7 954.7,212.1 950.6,207.7 953.1,202.6 955.1,197.4 958.2,192.6 956.5,187.6 955.5,182.3 953.2,177.5 953.0,172.4 955.7,168.0" fill="none" stroke="#fa870a" stroke-width="4.2" stroke-linejoin="miter" stroke-miterlimit="2"/>
<polyline points="539.2,280.5 535.4,288.0 533.8,292.9 533.1,297.9 533.6,303.1 532.9,308.1 532.2,313.4 531.5,318.6 527.9,323.0 527.0,328.2 525.4,333.2 521.4,335.9 519.0,340.2 515.4,343.2 509.9,344.9 505.3,348.3 504.8,354.7 502.8,360.8 507.3,364.8 512.9,367.1 517.8,368.3 522.9,367.6 527.9,368.3 530.5,364.6 533.4,361.1 535.4,357.0 541.0,359.3 545.5,363.3 549.6,366.0 553.3,369.3 558.0,370.9 559.7,375.8 558.7,381.1 560.6,385.9 557.5,390.6 554.5,395.4 553.5,401.2 550.5,406.0 553.6,409.9 553.3,415.2 555.2,419.6 558.0,423.6 556.9,428.1 556.8,432.8 555.2,437.1 553.0,441.2 556.4,446.5 560.6,451.2 565.2,453.6 568.0,458.3 573.1,460.0 570.3,464.3 569.0,469.3 565.1,472.9 563.1,477.6 564.4,483.4 563.3,489.5 565.6,495.2 569.1,498.9 573.9,500.2 578.1,502.7 582.6,500.6 586.8,498.3 590.7,495.2 595.3,494.0 599.8,492.4 602.5,487.5 607.2,486.4 611.8,485.0 615.8,482.6 617.7,488.8 618.3,495.2 625.8,497.7 625.9,502.3 628.0,506.8 625.8,511.6 627.4,516.1 629.2,520.6 628.3,525.3 632.4,528.9 637.5,531.1 642.1,533.9 645.9,537.9 644.7,542.3 644.6,547.0 643.1,551.3 640.9,555.4 644.4,559.0 648.9,561.0 654.3,561.5 657.1,566.3 662.7,566.6 666.0,570.5 664.0,577.0 661.0,583.0 664.0,586.7 668.3,588.4 672.6,590.0 676.0,593.1 677.7,599.3 678.6,605.7 681.4,610.5 684.7,615.1 686.1,620.7 680.5,620.8 676.5,625.5 671.0,625.7 670.0,630.8 668.5,635.8 670.2,641.2 673.8,645.7 676.0,650.9 672.1,654.2 671.7,659.7 668.5,663.4 670.7,667.7 674.2,670.5 678.4,672.6 680.2,677.0 681.8,681.4 685.3,684.8 686.5,689.5 689.7,693.0 689.7,699.7 683.7,701.0 678.4,704.2 682.9,706.5 687.5,708.7 691.7,711.6 696.5,713.3 700.6,715.3 705.1,716.6 707.9,720.8 712.3,722.3 713.9,727.5 713.9,732.8 714.6,738.1 717.3,742.2 722.1,744.1 725.9,747.2 728.1,751.7 733.1,749.0 738.8,749.0 744.0,747.2 746.7,751.5 749.2,755.8 750.7,760.7 749.4,766.0 746.3,770.9 746.2,776.6 747.0,781.1 746.5,785.6 744.9,790.1 746.2,794.6 739.4,800.3" fill="none" stroke="#fa870a" stroke-width="4.2" stroke-linejoin="miter" stroke-miterlimit="2"/>
<polyline points="553.0,441.2 547.2,442.6 541.4,444.0 535.4,443.7 531.0,442.4 526.2,443.6 521.9,441.3 517.3,441.1 512.9,439.9 511.7,445.1 507.8,448.7 502.8,453.1 497.8,457.5 497.8,465.0 499.6,470.0 498.4,475.1 499.9,480.0 500.0,485.1 499.1,490.2 499.0,495.2 494.5,498.2 491.5,502.7 492.5,507.5 491.9,512.2 490.2,516.9 488.9,521.6 489.8,526.4 490.2,531.2 487.9,535.8 490.8,540.7 489.0,545.4 485.3,548.5 484.1,553.4 481.8,557.4 479.2,561.2 475.9,564.6 472.7,568.0 469.6,571.7 469.5,576.9 466.4,580.6 466.7,585.3 467.0,590.0 468.5,594.5 468.4,599.2 470.6,603.7 471.1,608.4 470.2,613.2 473.6,617.8 474.7,623.5 477.7,628.3 476.2,632.9 474.8,637.6 472.1,641.8 470.8,646.4 468.9,650.9 469.2,656.0 467.2,660.9 467.2,665.9 468.3,671.0 466.9,676.0 466.7,681.0 466.4,686.0 461.7,687.1 457.9,689.7 454.5,693.2 450.1,694.8 446.2,698.5 446.2,704.4 442.8,708.4 439.3,712.3 438.6,717.8 435.0,721.7 432.5,726.2 428.7,729.5 423.5,729.4 418.9,731.0 414.8,733.4 410.5,735.5 406.2,737.9 404.2,742.6 400.4,745.5 396.2,748.1 392.7,751.6 389.0,754.7 385.4,758.1 382.1,761.5 377.9,763.9 375.3,768.1 370.8,769.8 368.2,773.9 364.2,776.3 361.9,780.8 356.9,781.9 353.5,784.9 350.2,788.2 346.3,791.5 344.3,796.0 342.7,800.8 343.1,805.9 342.4,810.9 341.2,815.8 341.4,820.9" fill="none" stroke="#fa870a" stroke-width="4.2" stroke-linejoin="miter" stroke-miterlimit="2"/>
<ellipse cx="1108" cy="190" rx="14" ry="18" fill="#000" opacity="0.55" filter="url(#bl)"/>
<ellipse cx="1062" cy="322" rx="10" ry="14" fill="#000" opacity="0.55" filter="url(#bl)"/>
<ellipse cx="920" cy="735" rx="12" ry="16" fill="#000" opacity="0.55" filter="url(#bl)"/>
<ellipse cx="940" cy="660" rx="8" ry="12" fill="#000" opacity="0.55" filter="url(#bl)"/>
<ellipse cx="590" cy="830" rx="10" ry="14" fill="#000" opacity="0.55" filter="url(#bl)"/>
<g filter="url(#sh)">
<use href="#pin" x="1083.8" y="168.8" fill="#1a5fd0"/>
<use href="#pin" x="877.6" y="703.7" fill="#1a5fd0"/>
<use href="#pin" x="547.7" y="779.0" fill="#1a5fd0"/>
<use href="#pin" x="1083.8" y="168.8" fill="#12b80c"/>
<use href="#pin" x="1050.8" y="256.8" fill="#12b80c"/>
<use href="#pin" x="1016.0" y="277.7" fill="#12b80c"/>
<use href="#pin" x="1028.6" y="288.6" fill="#12b80c"/>
<use href="#pin" x="1033.6" y="293.6" fill="#12b80c"/>
<use href="#pin" x="1001.0" y="297.8" fill="#12b80c"/>
<use href="#pin" x="1040.3" y="307.8" fill="#12b80c"/>
<use href="#pin" x="1040.3" y="307.9" fill="#a4a4a4"/>
<use href="#pin" x="1029.8" y="365.9" fill="#12b80c"/>
<use href="#pin" x="1022.3" y="391.0" fill="#12b80c"/>
<use href="#pin" x="1018.5" y="408.6" fill="#12b80c"/>
<use href="#pin" x="973.3" y="494.0" fill="#f9d521"/>
<use href="#pin" x="968.3" y="529.1" fill="#12b80c"/>
<use href="#pin" x="886.6" y="601.1" fill="#f9d521"/>
<use href="#pin" x="920.2" y="620.2" fill="#f9d521"/>
<use href="#pin" x="936.3" y="633.2" fill="#f9d521"/>
<use href="#pin" x="905.7" y="634.7" fill="#f41c1c"/>
<use href="#pin" x="908.2" y="644.3" fill="#12b80c"/>
<use href="#pin" x="903.0" y="650.0" fill="#f9d521"/>
<use href="#pin" x="945.3" y="650.3" fill="#f9d521"/>
<use href="#pin" x="937.3" y="652.3" fill="#f9d521"/>
<use href="#pin" x="892.1" y="653.3" fill="#f9d521"/>
<use href="#pin" x="916.2" y="653.3" fill="#12b80c"/>
<use href="#pin" x="905.2" y="663.3" fill="#12b80c"/>
<use href="#pin" x="851.4" y="678.8" fill="#f9d521"/>
<use href="#pin" x="892.3" y="694.5" fill="#f9d521"/>
<use href="#pin" x="870.2" y="700.9" fill="#12b80c"/>
<use href="#pin" x="838.0" y="714.7" fill="#12b80c"/>
<use href="#pin" x="853.7" y="716.6" fill="#f9d521"/>
<use href="#pin" x="900.6" y="716.6" fill="#f9d521"/>
<use href="#pin" x="895.0" y="720.0" fill="#f9d521"/>
<use href="#pin" x="883.1" y="723.9" fill="#12b80c"/>
<use href="#pin" x="848.1" y="737.7" fill="#12b80c"/>
<use href="#pin" x="586.6" y="765.1" fill="#a4a4a4"/>
<use href="#pin" x="545.2" y="771.4" fill="#f9d521"/>
<use href="#pin" x="582.9" y="781.4" fill="#a4a4a4"/>
<use href="#pin" x="527.6" y="782.7" fill="#a4a4a4"/>
<use href="#pin" x="567.8" y="785.2" fill="#a4a4a4"/>
<use href="#pin" x="542.7" y="787.7" fill="#12b80c"/>
<use href="#pin" x="560.3" y="799.0" fill="#f9d521"/>
<use href="#pin" x="541.4" y="802.8" fill="#a4a4a4"/>
<use href="#pin" x="520.1" y="807.8" fill="#a4a4a4"/>
<use href="#pin" x="585.4" y="810.3" fill="#a4a4a4"/>
<use href="#pin" x="565.3" y="812.8" fill="#f9d521"/>
<use href="#pin" x="551.5" y="817.8" fill="#f9d521"/>
<use href="#pin" x="536.4" y="825.4" fill="#f9d521"/>
<use href="#pin" x="585.4" y="834.2" fill="#f9d521"/>
<use href="#pin" x="560.3" y="837.9" fill="#12b80c"/>
<use href="#pin" x="533.9" y="843.0" fill="#f9d521"/>
<use href="#pin" x="557.8" y="843.0" fill="#f9d521"/>
</g>
</svg>
  <div class="abs" style="left:13.5px;top:13px;width:39px;height:76.5px;border:2px solid rgba(0,0,0,0.2);border-radius:5px;background-clip:padding-box"></div>
  <div class="abs" style="left:15.5px;top:15px;width:35px;height:72.5px;background:#fff;border-radius:3px"></div>
  <div class="abs" style="left:15.5px;top:50.8px;width:35px;height:1px;background:#ccc"></div>
  <div class="abs" style="left:26px;top:32px;width:16px;height:3px;background:#111"></div>
  <div class="abs" style="left:32.5px;top:25.5px;width:3px;height:16px;background:#111"></div>
  <div class="abs" style="left:26px;top:69.5px;width:16px;height:2.8px;background:#111"></div>

  <div class="abs" id="legend" style="left:12px;top:493px;width:264px;height:220px;background:rgba(255,255,255,0.92);border-radius:6px;box-shadow:0 1px 5px rgba(0,0,0,0.25);color:#555">
    <div class="abs" style="left:12px;top:48px;width:17px;height:16.5px;background:#2fbb2f"></div>
    <div class="abs" style="left:12px;top:73px;width:17px;height:16px;background:#d6c84a"></div>
    <div class="abs" style="left:12px;top:97px;width:17px;height:16px;background:#d7415f"></div>
    <div class="abs" style="left:12px;top:122px;width:17px;height:16px;background:#848484"></div>
    <div class="abs" style="left:12px;top:150px;width:239px;height:1px;background:#aaa"></div>
    <svg class="abs" style="left:233.5px;top:48.5px" width="17" height="17" viewBox="0 0 17 17"><rect x="0" y="0" width="17" height="17" rx="3" fill="#0d62d9"/><path d="M3.8 8.8 L7 12 L13.2 5.2" stroke="#fff" stroke-width="2.3" fill="none" stroke-linecap="round" stroke-linejoin="round"/></svg>
<svg class="abs" style="left:233.5px;top:73px" width="17" height="17" viewBox="0 0 17 17"><rect x="0" y="0" width="17" height="17" rx="3" fill="#0d62d9"/><path d="M3.8 8.8 L7 12 L13.2 5.2" stroke="#fff" stroke-width="2.3" fill="none" stroke-linecap="round" stroke-linejoin="round"/></svg>
<svg class="abs" style="left:233.5px;top:97px" width="17" height="17" viewBox="0 0 17 17"><rect x="0" y="0" width="17" height="17" rx="3" fill="#0d62d9"/><path d="M3.8 8.8 L7 12 L13.2 5.2" stroke="#fff" stroke-width="2.3" fill="none" stroke-linecap="round" stroke-linejoin="round"/></svg>
<svg class="abs" style="left:233.5px;top:122px" width="17" height="17" viewBox="0 0 17 17"><rect x="0" y="0" width="17" height="17" rx="3" fill="#0d62d9"/><path d="M3.8 8.8 L7 12 L13.2 5.2" stroke="#fff" stroke-width="2.3" fill="none" stroke-linecap="round" stroke-linejoin="round"/></svg>
<svg class="abs" style="left:233.5px;top:163.5px" width="17" height="17" viewBox="0 0 17 17"><rect x="0.5" y="0.5" width="16" height="16" rx="3" fill="#fff" stroke="#777" stroke-width="1"/></svg>
<svg class="abs" style="left:233.5px;top:188px" width="17" height="17" viewBox="0 0 17 17"><rect x="0" y="0" width="17" height="17" rx="3" fill="#0d62d9"/><path d="M3.8 8.8 L7 12 L13.2 5.2" stroke="#fff" stroke-width="2.3" fill="none" stroke-linecap="round" stroke-linejoin="round"/></svg>

  </div>
  <div class="abs" id="lgT" style="left:24.03px;top:511.41px;font-size:17px;line-height:17px;transform:scaleX(0.9701);transform-origin:0 0;font-weight:bold;color:#555">Legend</div>
  <div class="abs lgi" id="lg1" style="left:44.87px;top:542.26px;font-size:16px;line-height:16px;transform:scaleX(0.9217);transform-origin:0 0;color:#555">Active systems</div>
  <div class="abs lgi" id="lg2" style="left:44.78px;top:566.66px;font-size:16px;line-height:16px;transform:scaleX(0.9702);transform-origin:0 0;color:#555">Currently inactive</div>
  <div class="abs lgi" id="lg3" style="left:44.89px;top:590.96px;font-size:16px;line-height:16px;transform:scaleX(0.9663);transform-origin:0 0;color:#555">Awaiting repair</div>
  <div class="abs lgi" id="lg4" style="left:44.79px;top:615.46px;font-size:16px;line-height:16px;transform:scaleX(0.9803);transform-origin:0 0;color:#555">Planned/Under construction</div>
  <div class="abs lgi" id="lg5" style="left:44.89px;top:656.96px;font-size:16px;line-height:16px;transform:scaleX(0.9590);transform-origin:0 0;color:#555">Tatirano offices</div>
  <div class="abs lgi" id="lg6" style="left:43.96px;top:681.16px;font-size:16px;line-height:16px;transform:scaleX(0.9216);transform-origin:0 0;color:#555">Regions</div>

  <div class="abs" style="left:0;top:726px;width:282px;height:20.5px;background:rgba(255,255,255,0.8)"></div>
  <svg class="abs" style="left:6px;top:732px" width="15" height="10" viewBox="0 0 15 10"><rect width="15" height="5" fill="#4c7be1"/><rect y="5" width="15" height="5" fill="#ffd500"/></svg>
  <div class="abs" id="attr" style="left:24.77px;top:729.53px;font-size:14.5px;line-height:14.5px;transform:scaleX(1.0393);transform-origin:0 0;"><span style="color:#0078a8">Leaflet</span> <span style="color:#333">|</span> <span style="color:#333">©</span> <span style="color:#0078a8">Mapbox</span> <span style="color:#333">©</span> <span style="color:#0078a8">OpenStreetMap</span></div>
</div>

<div id="side">
  <svg class="abs" style="left:30px;top:32px" width="27" height="21" viewBox="0 0 27 21">
    <path d="M1 10.5 Q7 1 13.5 1 Q20 1 26 10.5 Q20 20 13.5 20 Q7 20 1 10.5 Z" fill="#fff"/>
    <circle cx="13.5" cy="10.5" r="6" fill="#0057c2"/>
    <circle cx="13.5" cy="10.5" r="3.8" fill="#fff"/>
    <circle cx="12" cy="9" r="2" fill="#0057c2"/>
  </svg>
  <div class="abs" id="ours" style="left:65.81px;top:33.82px;font-size:21px;line-height:21px;transform:scaleX(0.9637);transform-origin:0 0;font-weight:bold">Our systems</div>
  <div class="abs" id="viewall" style="left:371.10px;top:34.02px;font-size:21px;line-height:21px;transform:scaleX(1.0163);transform-origin:0 0;font-weight:bold">View all</div>
  <svg class="abs" style="left:454px;top:35px" width="12" height="18" viewBox="0 0 12 18">
    <path d="M2 1.5 L10 9 L2 16.5" stroke="#fff" stroke-width="2.8" fill="none" stroke-linecap="round" stroke-linejoin="round"/>
  </svg>
  <div class="abs" style="left:30px;top:62.5px;width:442px;height:1.6px;background:#d8f0ff"></div>

  <!-- calculators -->
  <svg class="abs calc" style="left:457px;top:86px" width="16" height="22" viewBox="0 0 16 22"><rect x="0.5" y="0.5" width="15" height="19.5" rx="2.5" fill="#fff"/><rect x="3" y="3.5" width="10" height="3.5" fill="#0057c2"/><g fill="#0057c2"><rect x="3" y="9" width="2" height="2"/><rect x="7" y="9" width="2" height="2"/><rect x="11" y="9" width="2" height="2"/><rect x="3" y="12.5" width="2" height="2"/><rect x="7" y="12.5" width="2" height="2"/><rect x="11" y="12.5" width="2" height="2"/><rect x="3" y="16" width="6" height="2"/><rect x="11" y="16" width="2" height="2"/></g><path d="M0 21.5 L16 21.5" stroke="#fff" stroke-width="1" stroke-dasharray="1 1"/></svg>
  <svg class="abs calc" style="left:457px;top:215.5px" width="16" height="22" viewBox="0 0 16 22"><rect x="0.5" y="0.5" width="15" height="19.5" rx="2.5" fill="#fff"/><rect x="3" y="3.5" width="10" height="3.5" fill="#0057c2"/><g fill="#0057c2"><rect x="3" y="9" width="2" height="2"/><rect x="7" y="9" width="2" height="2"/><rect x="11" y="9" width="2" height="2"/><rect x="3" y="12.5" width="2" height="2"/><rect x="7" y="12.5" width="2" height="2"/><rect x="11" y="12.5" width="2" height="2"/><rect x="3" y="16" width="6" height="2"/><rect x="11" y="16" width="2" height="2"/></g><path d="M0 21.5 L16 21.5" stroke="#fff" stroke-width="1" stroke-dasharray="1 1"/></svg>
  <svg class="abs calc" style="left:457px;top:345px" width="16" height="22" viewBox="0 0 16 22"><rect x="0.5" y="0.5" width="15" height="19.5" rx="2.5" fill="#fff"/><rect x="3" y="3.5" width="10" height="3.5" fill="#0057c2"/><g fill="#0057c2"><rect x="3" y="9" width="2" height="2"/><rect x="7" y="9" width="2" height="2"/><rect x="11" y="9" width="2" height="2"/><rect x="3" y="12.5" width="2" height="2"/><rect x="7" y="12.5" width="2" height="2"/><rect x="11" y="12.5" width="2" height="2"/><rect x="3" y="16" width="6" height="2"/><rect x="11" y="16" width="2" height="2"/></g><path d="M0 21.5 L16 21.5" stroke="#fff" stroke-width="1" stroke-dasharray="1 1"/></svg>

  <div class="abs big" id="b1" style="left:29.75px;top:90.45px;font-size:57px;line-height:57px;transform:scaleX(0.9709);transform-origin:0 0;">38,471 people</div>
  <div class="abs sub" id="s1" style="left:30.95px;top:152.88px;font-size:22px;line-height:22px;transform:scaleX(1.0502);transform-origin:0 0;">used a Tatirano system last week</div>
  <div class="abs big" id="b2" style="left:29.77px;top:219.65px;font-size:57px;line-height:57px;transform:scaleX(0.9641);transform-origin:0 0;">35,488,461 litres</div>
  <div class="abs sub" id="s2" style="left:30.96px;top:281.88px;font-size:22px;line-height:22px;transform:scaleX(1.0429);transform-origin:0 0;">dispensed since September 5th, 2019</div>
  <div class="abs big" id="b3" style="left:29.43px;top:349.15px;font-size:57px;line-height:57px;transform:scaleX(0.9436);transform-origin:0 0;">57 / 98</div>
  <div class="abs sub" id="s3" style="left:30.94px;top:411.58px;font-size:22px;line-height:22px;transform:scaleX(1.0576);transform-origin:0 0;">systems actively dispensing water</div>
  <div class="abs big" id="b4" style="left:28.22px;top:478.05px;font-size:57px;line-height:57px;transform:scaleX(0.9878);transform-origin:0 0;">1</div>
  <div class="abs sub" id="s4" style="left:30.93px;top:540.58px;font-size:22px;line-height:22px;transform:scaleX(1.0655);transform-origin:0 0;">systems awaiting repair</div>
  <div class="abs big" id="b5" style="left:28.33px;top:606.95px;font-size:57px;line-height:57px;transform:scaleX(0.9693);transform-origin:0 0;">13</div>
  <div class="abs sub" id="s5" style="left:30.92px;top:669.88px;font-size:22px;line-height:22px;transform:scaleX(1.0826);transform-origin:0 0;">new systems planned/under construction</div>
</div>

<div id="foot-stripe"></div>
<div id="foot">
  <div class="abs ft" id="f1" style="left:29.58px;top:34.19px;font-size:17.5px;line-height:17.5px;transform:scaleX(0.9475);transform-origin:0 0;">Data collection and management audited by <u>Uptime</u>.</div>
  <div class="abs ft" id="f2" style="left:29.52px;top:59.79px;font-size:17.5px;line-height:17.5px;transform:scaleX(0.9483);transform-origin:0 0;">Statirano platform designed by <u>Atsimo25</u>.</div>
  <div class="abs" style="left:30px;top:100px;width:1860px;height:1px;background:#5c5c5c"></div>
  <div class="abs ft" id="f3" style="left:30.82px;top:117.90px;font-size:15px;line-height:15px;transform:scaleX(0.9713);transform-origin:0 0;">Copyright ©2019-2025 Tatirano SARLU, all rights reserved. <b>Tatirano SARLU</b> is a registered company in Madagascar.</div>
</div>
</body></html>
